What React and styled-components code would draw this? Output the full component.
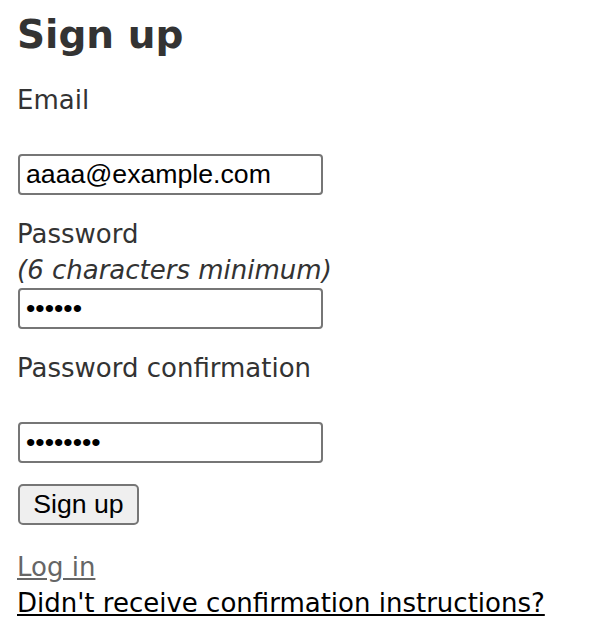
import React from "react";
import styled, { createGlobalStyle } from "styled-components";

const Global = createGlobalStyle`
  html, body { margin: 0; padding: 0; background: #fff; }
  body {
    color: #333;
    font-family: "DejaVu Sans", Verdana, sans-serif;
    font-size: 26px;
  }
`;

const Page = styled.div`
  padding: 12px 16px 0 17px;
`;

const Title = styled.h2`
  margin: 0 0 23.5px 0;
  font-family: "DejaVu Sans", Verdana, sans-serif;
  font-size: 39px;
  line-height: 46px;
  font-weight: bold;
  color: #333;
`;

const Form = styled.form`
  display: flex;
  flex-direction: column;
  align-items: flex-start;
  gap: 21px;
`;

const Field = styled.div`
  display: flex;
  flex-direction: column;
  align-items: flex-start;
`;

const Label = styled.label`
  display: block;
  line-height: 36px;
  margin-bottom: ${(p) => (p.$blank ? "36px" : "0")};
`;

const Hint = styled.em`
  display: block;
  font-style: italic;
  line-height: 36px;
`;

const TextInput = styled.input`
  display: block;
  box-sizing: border-box;
  width: 305px;
  height: 41px;
  margin: 0 0 0 1px;
  padding: 0 6px;
  border: 2px solid #767676;
  border-radius: 4px;
  background: #fff;
  color: #000;
  font-family: "Liberation Sans", Arial, sans-serif;
  font-size: 26.67px;
  outline: none;
`;

const Actions = styled.div`
  margin-top: 0;
`;

const Submit = styled.button`
  box-sizing: border-box;
  width: 121px;
  height: 41px;
  margin-left: 1px;
  padding: 0;
  border: 2px solid #767676;
  border-radius: 5px;
  background: #efefef;
  color: #000;
  font-family: "Liberation Sans", Arial, sans-serif;
  font-size: 26.67px;
`;

const Links = styled.div`
  display: flex;
  flex-direction: column;
  align-items: flex-start;
  margin-top: 24px;
`;

const Link = styled.a`
  display: block;
  line-height: 36px;
  color: ${(p) => (p.$visited ? "#666" : "#000")};
  text-decoration: underline;
`;

export default function App() {
  return (
    <>
      <Global />
      <Page>
        <Title>Sign up</Title>
        <Form onSubmit={(e) => e.preventDefault()}>
          <Field>
            <Label $blank htmlFor="user_email">Email</Label>
            <TextInput id="user_email" type="email" defaultValue="aaaa@example.com" />
          </Field>
          <Field>
            <Label htmlFor="user_password">Password</Label>
            <Hint>(6 characters minimum)</Hint>
            <TextInput id="user_password" type="password" defaultValue="aaaaaa" />
          </Field>
          <Field>
            <Label $blank htmlFor="user_password_confirmation">Password confirmation</Label>
            <TextInput id="user_password_confirmation" type="password" defaultValue="aaaaaaaa" />
          </Field>
          <Actions>
            <Submit type="submit">Sign up</Submit>
          </Actions>
        </Form>
        <Links>
          <Link href="#" $visited>Log in</Link>
          <Link href="#">Didn't receive confirmation instructions?</Link>
        </Links>
      </Page>
    </>
  );
}
